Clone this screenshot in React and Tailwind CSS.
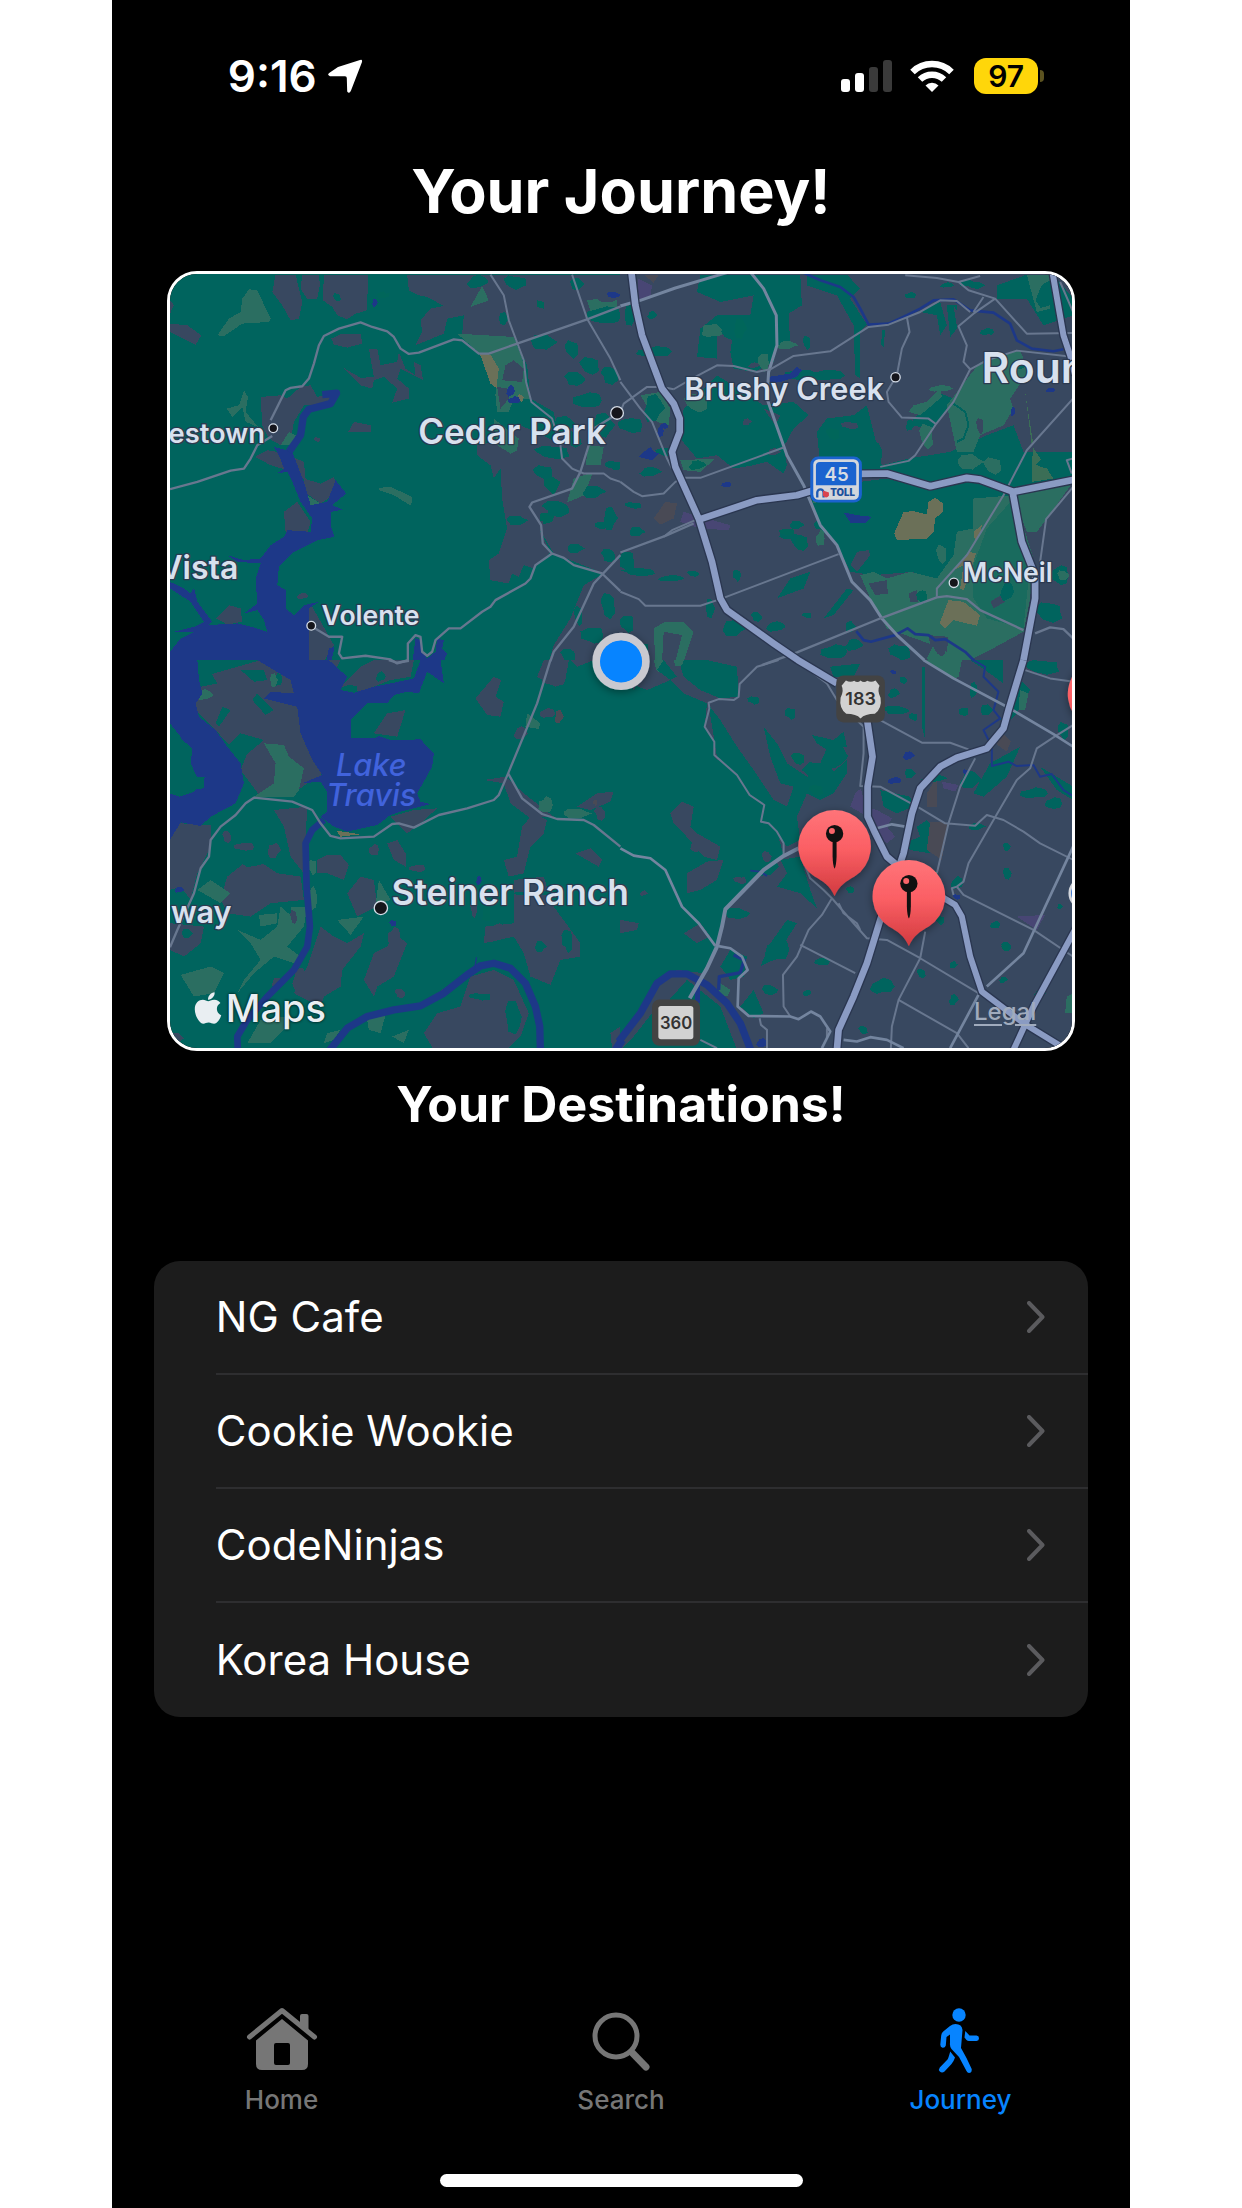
import { FaApple } from "react-icons/fa";

const SLATE = "#384860";
const GREEN = "#00645e";
const LIGHT = "#2b6e61";
const DEEP = "#00665a";
const TAN = "#6b7058";
const PURPLE = "#484674";
const BROWN = "#494a55";
const WATER = "#1d3888";

// Jagged patch around a centre point; the outline varies with its position.
function blob([cx, cy, rx, ry]) {
  const n = 9;
  let d = "";
  for (let i = 0; i < n; i++) {
    const a = (i / n) * Math.PI * 2;
    const k = 0.62 + 0.5 * Math.abs(Math.sin(cx * 1.7 + cy * 0.9 + i * 2.3));
    d += (i ? "L" : "M") + Math.round(cx + Math.cos(a) * rx * k) + " " + Math.round(cy + Math.sin(a) * ry * k);
  }
  return d + "Z";
}

// The map is tiled in four sheets, each with its own origin.
const sheets = [
  {
    x: 0,
    y: 0,
    base: GREEN,
    w: 1384,
    h: 1190,
    areas: [
      [SLATE, "M345 28L335 80 365 120 390 165 415 160 425 110 405 28ZM425 28L420 70 440 100 470 100 478 60 475 28ZM490 28L487 105 515 125 530 150 560 162 585 145 620 135 622 28Z"],
      [SLATE, "M740 28L745 75 775 90 800 95 850 122 810 130 780 165 785 200 765 240 850 205 860 160 910 150 905 205 1000 220 1065 220 1100 300 1110 400 1180 440 1200 560 1240 680 1110 715 1130 780 1180 865 1330 925 1270 960 1230 1060 1180 1140 1165 1190 1384 1190 1384 28Z"],
      [SLATE, "M950 540L1000 530 1080 480 1210 540 1240 680 1110 715 1130 780 1170 860 1120 910 1090 900 1075 935 1055 925 1045 955 990 945 985 885 1015 865 1040 790 1025 700 1020 610 1000 640 990 600 950 570Z"],
      [SLATE, "M28 175L80 180 122 210 105 238 28 200ZM512 220L545 205 600 205 605 235 560 247 520 238ZM625 250L650 250 660 300 710 290 715 260 735 310 765 330 760 290 780 300 788 345 720 310 710 340 745 370 745 400 695 412 710 370 670 335 640 345 635 370 600 360 545 305 600 338 640 335Z"],
      [SLATE, "M300 395L360 390 380 400 420 365 450 360 470 395 530 380 510 415 430 420 400 470 395 500 360 540 325 520 305 480ZM430 640L480 655 520 635 535 680 480 715 430 680ZM370 740L410 710 450 770 440 805 375 800ZM283 575L320 555 350 560 380 615 330 600ZM165 1060L205 1020 240 1030 245 1070 200 1078ZM563 500L580 470 630 480 632 500ZM435 1020L455 1025 520 1140 490 1190 440 1190ZM395 575L430 590 435 640 415 640ZM28 105L40 120 28 145Z"],
      [LIGHT, "M170 210L205 160 240 140 245 100 265 72 290 75 330 160 325 170 245 175 190 212ZM890 205L1060 215 1085 280 1110 400 1060 400 1045 440 1010 440 1005 390 1010 300 960 265ZM655 668L690 665 755 695 752 722 700 690 655 675ZM250 375L262 395 255 440 292 485 255 470 245 425 215 455 198 430 235 420ZM930 125L965 62 985 105ZM1280 105L1370 92 1370 125 1290 138ZM1285 540L1330 545 1320 600 1275 600ZM1240 640L1297 622 1272 690 1220 712ZM1000 460L1075 520 1070 555 1050 565 1010 540ZM430 685L480 715 450 720ZM360 540L385 500 405 510 400 540Z"],
      [SLATE, "M1035 300L1060 285 1090 310 1085 350 1025 345ZM1010 365L1040 370 1045 400 1020 430Z"],
      [TAN, "M958 265L990 268 1015 310 1008 368 990 355ZM1075 385L1090 395 1085 410 1070 405Z"],
      [DEEP, "M1155 620L1200 650 1180 690 1150 660ZM1140 745L1185 740 1175 770 1140 780ZM650 85L690 70 685 95 655 100ZM1130 105L1150 110 1150 130 1130 125Z"],
    ],
    blobs: [
      [GREEN, [[1060, 50, 30, 22], [1150, 230, 48, 22], [1030, 160, 18, 18], [1250, 55, 25, 18], [1330, 150, 50, 30], [1235, 250, 22, 28], [1290, 300, 35, 26], [1350, 330, 32, 26], [1245, 340, 38, 20], [1280, 405, 42, 26], [1210, 480, 40, 26], [1180, 560, 60, 20], [1240, 520, 30, 26], [1150, 620, 32, 22], [1330, 480, 38, 36], [1300, 680, 40, 18], [1070, 765, 38, 14], [1190, 730, 50, 24], [1320, 780, 16, 14], [1245, 850, 30, 14], [1360, 600, 26, 16], [1350, 760, 24, 34], [1345, 870, 26, 20], [1345, 1020, 26, 38], [1295, 1110, 34, 28], [1255, 1050, 14, 32], [1080, 50, 18, 16], [950, 50, 32, 20], [690, 60, 28, 30], [530, 95, 14, 12], [960, 390, 14, 40], [1225, 1170, 28, 20]]],
      [SLATE, [[425, 993, 16, 10], [470, 522, 10, 8], [1130, 780, 26, 20], [1350, 90, 50, 20]]],
      [WATER, [[643, 113, 9, 12], [1360, 88, 26, 9], [1050, 378, 12, 18], [1060, 405, 18, 12]]],
    ],
    water:
      "M340 545L395 560 430 650 450 720 500 710 525 645 557 685 515 720 545 733 512 740 510 780 522 815 470 825 400 860 355 905 350 960 375 975 375 1030 400 1050 430 1020 475 1010 445 1030 445 1200 28 1200 28 1160 60 1120 140 1080 230 1075 290 1090 320 1100 310 1065 290 1035 250 1045 290 1015 285 940 300 895 230 890 200 870 250 885 300 880 330 840 370 815 380 795 450 800 455 760 420 710 395 650 380 620 348 625 370 610 355 570ZM28 950L70 970 90 985 100 968 110 1010 155 1070 120 1100 40 1100 100 1085 130 1070 90 1010 28 970ZM765 1120L783 1125 785 1160 800 1180 825 1160 830 1120 850 1125 845 1150 860 1165 845 1200 755 1200ZM505 1150L522 1145 510 1200 495 1200Z",
    rivers: [[22, "M485 388L528 384 510 415 445 432 428 455 420 510 385 560"]],
    roads: [
      [7, "M28 672L110 650 210 616 250 610 270 580 290 540 335 512M330 465L335 455 360 405M360 405L375 375 390 368 425 363 445 340 460 295 475 240 490 212 535 190 600 171 635 185 680 198 700 215 720 250 745 266 775 262 880 222 905 225 955 265 985 265 1070 235 1280 162 1380 124"],
      [6, "M990 28L1030 90 1045 165 1090 285 1097 350 1113 410 1175 460 1200 540 1205 580 1235 610 1270 625 1330 625 1350 640 1380 650M1235 28L1280 160 1350 280 1380 345"],
      [7, "M1380 440L1300 490 1285 540 1260 620 1235 670 1115 712 1107 725 1142 780 1147 835 1175 865 1210 878 1240 900 1325 925 1380 978M1175 865L1125 900 1110 940 1095 955 1005 1005 990 1025 965 1040 900 1090 865 1090 825 1125 815 1160 800 1172 785 1160 780 1115 765 1110 742 1135 742 1185 710 1195 690 1183 615 1172 545 1180 535 1165 545 1115 505 1115 455 1085M1380 870L1300 955 1240 1085 1180 1160 1170 1188"],
    ],
    highways: [],
  },
  {
    x: 1380,
    y: 0,
    base: SLATE,
    w: 1380,
    h: 1190,
    areas: [
      [GREEN, "M240 28L540 28 545 120 505 145 510 240 470 250 460 290 400 320 340 310 330 260 340 190 290 195 290 280 230 275 240 190 290 150 390 150 400 90 300 110 230 80ZM560 28L680 28 720 70 690 100 740 178 720 200 720 340 705 330 700 180 650 90 560 60ZM190 430L290 330 430 420 520 410 565 450 520 490 490 545 500 600 490 625 440 590 400 600 340 610 290 570 230 580 180 520ZM620 460L700 450 740 420 785 600 865 580 990 560 1100 510 1180 480 1210 560 1359 560 1359 650 1180 680 1040 640 930 670 800 620 600 600 590 500ZM570 690L720 650 800 640 930 675 1040 645 1180 690 1100 800 1000 900 950 990 880 920 760 930 690 920 650 840 600 790Z"],
      [GREEN, "M1130 100L1220 100 1270 180 1359 150 1359 100 1300 28 1220 28 1130 60ZM900 140L960 110 980 180 960 210 950 150ZM980 120L1010 120 1010 190 990 215ZM785 195L795 195 790 245 783 240ZM865 480L950 380 1000 400 940 490ZM610 1060L680 970 700 975 640 1050ZM470 1000L510 940 570 920 550 970Z"],
      [LIGHT, "M100 1090L130 1072 190 1070 220 1100 190 1190 165 1190 185 1110 130 1100 125 1190 105 1190Z"],
      [LIGHT, "M1080 290L1200 255 1225 320 1170 400 1180 430 1150 480 1080 510 1060 560 1010 560 980 420ZM1220 28L1300 28 1290 130 1250 140ZM1180 690L1359 650 1280 760 1250 800 1220 800ZM245 210L250 180 300 175 305 210 260 215ZM865 440L880 420 920 410 960 370 965 395 900 450ZM180 585L285 580 240 620 190 615ZM60 390L120 380 150 430 145 480 110 470ZM570 680L720 670 650 690 580 715Z"],
      [LIGHT, "M1060 700L1180 690 1240 880 1230 1000 1210 1100 1100 1160 1020 1200 950 1200 920 1180 940 1140 800 1090 750 1000 720 930 760 920 800 940 870 920 950 940 1000 870 1010 800 1060 790Z"],
      ["#196b5e", "M1100 790L1180 700 1230 900 1210 1090 1100 1060 1060 1000 1060 900Z"],
      ["#3b6e56", "M1238 545L1300 640 1235 650ZM1215 380L1240 540 1235 540Z"],
      [TAN, "M850 740L880 738 920 748 925 710 945 697 968 715 968 740 945 760 940 800 920 820 830 825 822 805ZM985 1005L1030 1010 1080 1050 1070 1082 1000 1065 975 1090 958 1075ZM1000 915L1045 860 1068 865 1040 950 1030 975 1020 970 1030 900ZM1060 800L1085 780 1080 810 1065 830Z"],
      [PURPLE, "M52 40L95 60 90 100 55 100ZM190 740L330 780 325 795 240 790 180 770Z"],
      [BROWN, "M100 760L135 710 170 715 160 760 120 778ZM70 28L115 28 100 52Z"],
      [SLATE, "M745 955L800 945 803 985 765 990ZM690 900L710 860 745 855 750 870 710 920ZM865 985L890 975 895 1010 870 1010ZM925 1110L985 1115 980 1160 930 1140ZM1000 120L1050 200 1015 215ZM1110 1010L1150 985 1155 1010 1120 1030ZM430 430L480 450 465 480Z"],
    ],
    blobs: [
      [GREEN, [[30, 150, 22, 30], [95, 150, 16, 12], [100, 260, 50, 18], [330, 190, 40, 32], [330, 390, 45, 20], [540, 330, 45, 20], [610, 330, 60, 18], [770, 560, 22, 30], [30, 480, 36, 26], [100, 430, 34, 40], [260, 490, 32, 24], [320, 550, 30, 26], [90, 620, 36, 14], [130, 560, 24, 14], [40, 720, 28, 10], [50, 800, 28, 14], [20, 890, 22, 40], [150, 940, 38, 10], [220, 925, 22, 9], [60, 920, 60, 12], [500, 810, 22, 14], [540, 830, 30, 24], [530, 780, 26, 12], [600, 780, 24, 12], [410, 1055, 20, 14], [465, 1085, 28, 16], [340, 1090, 40, 24], [270, 1030, 16, 28], [350, 930, 12, 20], [560, 1050, 14, 10], [690, 1085, 18, 16], [640, 1160, 38, 24], [700, 1140, 28, 18], [840, 1160, 34, 26], [1320, 930, 24, 34], [1290, 1040, 48, 30], [1160, 980, 20, 30], [1070, 60, 30, 10], [870, 90, 16, 10], [980, 60, 20, 8], [1040, 55, 20, 12], [1280, 90, 34, 40], [1300, 590, 50, 22], [1100, 200, 20, 12], [1200, 300, 26, 12], [560, 230, 12, 22], [20, 1075, 20, 30], [60, 1150, 30, 22], [870, 480, 16, 16]]],
      [DEEP, [[360, 190, 22, 30], [230, 600, 28, 14], [500, 800, 22, 12], [545, 835, 24, 20], [905, 995, 16, 24], [640, 505, 24, 18]]],
      [LIGHT, [[280, 195, 24, 16], [430, 290, 16, 32], [500, 240, 34, 12], [920, 510, 22, 40], [960, 370, 34, 10], [1050, 590, 46, 22], [1120, 600, 30, 26], [1330, 930, 22, 14], [230, 410, 38, 30], [965, 865, 18, 28], [600, 820, 12, 28]]],
      [SLATE, [[400, 300, 18, 8], [460, 560, 22, 10], [380, 470, 16, 10], [690, 480, 28, 12], [960, 1150, 20, 22], [1080, 480, 12, 26]]],
      [WATER, [[318, 658, 14, 9], [1290, 375, 14, 7], [1178, 440, 6, 16], [120, 498, 9, 22], [135, 482, 12, 8]]],
    ],
    water:
      "M445 335L510 325 530 305 545 315 530 335 480 350 450 355ZM55 575L68 562 90 545 100 558 115 565 95 585ZM670 742L710 750 755 755 735 773 690 772Z",
    rivers: [[8, "M545 20L600 45 660 65 700 95 720 130 745 178 805 175 860 150 900 130 940 105 1000 102 1050 135 1120 142 1170 175 1190 225 1235 250 1300 258 1330 252M708 1098L730 1125 752 1130 825 1110 862 1090 885 1107 925 1110 945 1125 975 1122 1035 1160 1062 1187"]],
    teal: "M1000 415L1035 440 1045 480 1030 520 1010 530",
    roads: [
      [9, "M0 122L60 105 165 68 320 22M390 20L430 70 468 150 470 240 445 320 440 400 500 570 550 660 600 780 650 840 695 950 750 1005 785 1060 830 1110 912 1185"],
      [6, "M160 372L215 340 290 300 340 302 410 320 450 312 520 272 630 258 745 185 805 178 900 140 960 105 1010 107 1050 140M855 30L950 38 1015 50 1045 75 1125 100 1220 205 1359 203M1015 50L1080 32M1090 95L1060 140M1125 100L1060 145 1015 183 1040 240 1030 290 1050 312M1359 275L1190 256 1100 285 1050 312 1000 410 945 480 885 570 865 587 780 605M860 155L868 200 845 250 830 330 800 380 805 410 845 457 925 460 945 475M1359 400L1220 555 1150 690 1040 870 950 970 950 995M0 350L60 430 95 470 140 580 155 610M0 440L10 415 80 365 125 365 160 372M0 650L40 680 65 693 130 685 165 650 190 638 240 638 490 547M130 815L155 795 225 765M0 980L55 1002 75 1022 240 1022 300 1002 655 867M1359 665L1278 762 1260 890M1320 50L1359 140M1359 580L1340 585 1355 625"],
      [7, "M0 862L135 812 220 775M425 1200L530 1162 785 1058 950 997 980 993 1040 1002 1080 1035 1210 1095M1245 1105L1290 1087 1330 1092 1359 1120"],
    ],
    highways: [
      [20, "M33 20L45 120 65 210 110 330 125 370 160 415 178 460 178 500 155 560 165 605 235 760 275 890 300 1000 320 1035 460 1135 533 1185 650 1255"],
      [20, "M240 762L410 705 530 690 630 660M720 626L800 625 930 663 1040 638 1080 643 1180 680 1380 640"],
      [20, "M1178 684L1205 830 1245 930 1245 1000 1210 1185"],
      [18, "M1297 20L1330 210 1350 270 1365 330"],
    ],
  },
  {
    x: 0,
    y: 1185,
    base: GREEN,
    w: 1384,
    h: 1200,
    areas: [
      [SLATE, "M115 60L160 40 300 0 380 30 405 90 430 200 485 350 440 370 400 400 300 410 240 330 260 280 200 250 165 210 105 150ZM28 500L60 490 150 495 150 560 110 640 90 720 60 680 28 690ZM200 650L250 610 290 600 350 640 420 650 430 720 330 730 270 770 200 760 180 715ZM28 790L130 800 120 850 70 890 28 870ZM340 450L440 440 430 640 390 590 370 500ZM470 600L500 585 540 585 565 615 550 660 500 640 470 640ZM560 700L600 650 640 660 650 740 590 770ZM480 800L520 830 560 850 610 820 600 860 545 930 540 980 490 1010 480 1040 400 1000 440 920ZM680 550L710 540 735 580 735 620 700 600ZM945 115L1000 50 1022 60 1005 110 1030 125 1020 170 980 165ZM640 220L680 160 735 150 710 230ZM1130 50L1150 0 1225 0 1215 60 1185 80ZM1300 0L1250 20 1230 0Z"],
      [SLATE, "M1085 500L1120 460 1160 480 1150 520 1110 560 1090 640 1045 650 1030 600 1070 590ZM1060 660L1150 650 1165 700 1180 740 1260 850 1260 890 1200 900 1170 975 1110 950 1090 880 1060 830 970 850 975 800 1060 790ZM790 1120L830 1060 900 1040 930 950 1000 930 1060 960 1105 1060 1080 1130 1040 1170 820 1170ZM970 360L1035 350 1090 400 1180 470 1110 475 1050 430 1030 370ZM1245 580L1290 565 1325 600 1315 620ZM700 820L740 850 720 900 700 950 650 980 640 1010 610 960 640 880 680 860ZM830 1000L900 950 940 920 900 960ZM690 470L760 450 830 445 780 490 740 520Z"],
      [SLATE, "M540 80L600 20 640 0 760 0 750 50 690 60 600 95ZM460 0L540 0 520 40ZM1350 1120L1380 1100 1380 1165 1355 1165ZM1250 440L1310 400 1360 395 1350 425 1290 450Z"],
      [LIGHT, "M310 250L370 255 385 290 430 325 415 390 400 410 280 410 340 370 345 310ZM110 690L150 660 210 700 180 730ZM230 810L300 840 350 800 360 740 430 800 380 860 420 890 400 910 340 890 280 940 230 1000 250 960 300 900 270 850ZM60 945L150 920 190 940 160 1000 100 1010ZM260 1150L300 1080 375 1070 375 1105 330 1150ZM530 780L610 770 570 825ZM655 660L690 720 645 735ZM620 1080L675 1065 660 1120 625 1110ZM695 1130L745 1110 730 1150ZM500 1120L540 1110 520 1140 490 1150ZM295 765L350 760 350 790 300 800ZM390 740L440 740 430 800 400 800ZM1100 160L1140 190 1135 207 1095 200Z"],
      [GREEN, "M240 30L310 30 320 60 280 65ZM275 120L290 100 340 150 315 165ZM165 190L185 140 210 150 175 200ZM110 40L150 35 170 70 120 80ZM200 260L240 220 310 240 250 290Z"],
      [TAN, "M528 512L600 523 540 530Z"],
      [DEEP, "M970 740L990 740 990 785 965 780Z"],
    ],
    blobs: [
      [SLATE, [[770, 625, 24, 12], [1080, 220, 20, 20], [1160, 160, 22, 16], [400, 770, 12, 20], [340, 570, 22, 26], [250, 560, 30, 14], [110, 560, 20, 20], [200, 530, 16, 18], [640, 570, 14, 20], [1180, 60, 34, 20], [1320, 460, 20, 20], [50, 1135, 22, 16], [420, 960, 28, 34], [700, 830, 18, 30], [1010, 820, 34, 28], [940, 745, 12, 26], [720, 1000, 20, 14], [350, 970, 20, 16]]],
      [GREEN, [[350, 60, 14, 22], [280, 600, 40, 22], [330, 540, 44, 14], [240, 500, 16, 14], [1140, 860, 20, 16], [1220, 840, 16, 40], [1060, 1070, 30, 50], [960, 1010, 34, 12], [1120, 700, 60, 8], [570, 85, 22, 12], [660, 50, 14, 16], [80, 820, 20, 14]]],
      [LIGHT, [[130, 105, 26, 16], [340, 60, 14, 20], [1155, 435, 20, 28], [1250, 460, 50, 14], [455, 720, 14, 40], [455, 620, 12, 26]]],
      [BROWN, [[1195, 170, 14, 20], [1305, 428, 6, 10]]],
      [WATER, [[55, 690, 14, 9], [698, 790, 13, 9], [955, 662, 8, 14]]],
    ],
    water:
      "M28 0L110 0 115 60 125 100 105 130 115 170 165 210 200 260 240 310 250 370 225 430 150 470 120 498 60 487 28 540 28 400 55 410 100 395 135 350 105 350 75 320 60 230 28 190ZM290 0L505 0 560 50 540 90 580 98 640 80 690 70 760 55 780 0 840 0 850 70 800 35 775 100 740 95 700 105 680 130 620 130 570 180 570 235 640 235 655 228 690 240 780 238 820 280 815 320 770 400 780 425 810 432 720 455 690 465 650 495 560 515 520 500 480 470 500 455 500 395 480 365 425 370 485 345 455 300 420 220 410 140 310 115 330 95 400 100 390 60Z",
    green: "M28 210L60 235 95 265 90 310 108 350 130 350 130 385 60 390 95 375 85 350 50 400 28 400Z",
    rivers: [[20, "M490 480L455 510 435 550 438 680 448 800 440 860 400 930 320 1010 260 1080 230 1130 232 1180"], [22, "M500 1180L560 1105 620 1070 700 1050 780 1038 850 1000 920 945 960 918 1000 910 1050 925 1095 970 1125 1040 1138 1100 1140 1180"], [4, "M948 892L942 930"], [24, "M1360 1180L1385 1140"]],
    roads: [
      [7, "M28 862L50 810 100 700 120 625 145 590 150 540 180 500 225 465 255 430 280 413 395 425 455 450 480 490 510 528 540 535 640 530 695 492 715 490 760 503 835 465 920 445 1000 420 1015 405 1043 340 1130 130 1170 0M1043 340L1085 415 1145 462 1190 477 1270 480 1300 495 1380 560M685 0L710 8 745 2"],
    ],
    highways: [],
  },
  {
    x: 1380,
    y: 1185,
    base: SLATE,
    w: 1380,
    h: 1200,
    areas: [
      [GREEN, "M0 60L80 90 150 60 190 100 260 130 253 200 282 245 282 290 350 350 388 405 432 435 422 485 470 515 490 585 430 630 320 745 290 860 250 940 170 930 100 980 0 1150ZM175 0L260 0 350 20 355 110 300 115 240 90 190 50ZM0 1170L120 1050 200 960 300 1040 350 1170Z"],
      [GREEN, "M265 135L300 180 350 260 400 330 460 420 500 440 520 380 480 370 450 290 430 200 470 250 500 310 560 350 600 370 680 300 680 340 640 400 600 420 560 400 530 470 540 540 500 560 440 500 350 400 290 290ZM575 225L640 240 670 215 680 260 620 270 590 250ZM480 600L540 590 570 690 590 745 540 700 470 680 500 640ZM330 870L380 890 370 950 330 960 300 920ZM780 390L870 410 880 440 830 460 790 440ZM890 500L920 480 950 510 930 580 870 570 850 550 900 530ZM500 780L530 790 460 900 420 920 450 850ZM360 1040L400 990 430 1060 400 1075ZM1060 400L1110 310 1200 260 1160 350 1090 410ZM1140 180L1190 100 1200 60 1230 90 1190 160 1160 190ZM905 20L915 20 915 240 905 200ZM630 20L720 10 700 50 640 50Z"],
      [LIGHT, "M910 0L1025 0 1015 50 1000 60ZM300 970L330 990 320 1010 295 1000ZM1340 1010L1359 1000 1359 1060 1335 1060ZM1200 90L1225 100 1215 150 1195 150Z"],
      [LIGHT, "M100 0L128 0 125 20 112 48ZM160 0L190 0 185 16 165 18Z"],
      [PURPLE, "M705 400L722 385 735 440 770 450 815 475 800 500 825 530 800 550 785 540 760 480 690 440ZM1190 770L1275 765 1250 810ZM965 365L1015 375 1005 395 970 385Z"],
      [BROWN, "M930 485L985 488 965 600 920 570ZM1125 250L1150 220 1172 245 1160 275ZM920 400L950 350 950 440 920 440Z"],
      [SLATE, "M150 460L185 425 220 440 210 500 230 520 300 560 290 600 250 590 190 520 160 490ZM200 640L260 605 310 600 290 660 240 690 200 700ZM0 780L55 790 50 810 0 820ZM190 820L240 790 270 830 230 850ZM360 700L400 690 380 740ZM0 30L60 60 40 90Z"],
      [GREEN, "M130 0L170 50 150 60 110 30ZM1050 0L1150 0 1150 70 1095 30ZM1260 320L1359 380 1359 420 1310 390ZM60 1165L120 1110 95 1060 40 1130Z"],
    ],
    blobs: [
      [GREEN, [[510, 160, 16, 20], [400, 120, 18, 14], [830, 150, 50, 12], [880, 170, 14, 12], [820, 100, 18, 14], [1060, 90, 12, 24], [1100, 150, 24, 16], [1030, 155, 14, 14], [870, 340, 20, 14], [940, 355, 40, 12], [1050, 360, 34, 26], [1160, 560, 14, 12], [1162, 640, 16, 18], [1160, 860, 18, 14], [1125, 795, 14, 12], [1000, 915, 14, 10], [605, 905, 22, 14], [785, 980, 34, 26], [905, 940, 16, 14], [1000, 1020, 16, 16], [1150, 960, 14, 9], [690, 690, 14, 10], [960, 780, 14, 14], [940, 640, 20, 10], [1010, 670, 18, 20], [560, 1000, 12, 10], [450, 990, 30, 14], [470, 870, 34, 40], [1260, 1000, 20, 10], [1320, 740, 10, 8], [730, 1110, 16, 12], [1240, 400, 40, 18], [1300, 430, 24, 20], [1070, 500, 30, 10], [1330, 210, 16, 30], [410, 620, 60, 40], [350, 760, 50, 16], [1270, 20, 60, 22], [850, 60, 14, 10], [600, 340, 60, 34], [640, 290, 40, 40], [220, 1140, 26, 22]]],
      [DEEP, [[535, 295, 24, 18], [590, 390, 26, 16], [1030, 158, 12, 10], [605, 903, 14, 9], [690, 688, 12, 8], [1155, 862, 12, 10]]],
      [SLATE, [[90, 40, 40, 20], [440, 590, 18, 16], [360, 660, 20, 12], [420, 700, 14, 12], [70, 700, 12, 8], [235, 560, 24, 20]]],
      [WATER, [[865, 287, 20, 12], [822, 362, 20, 11], [820, 36, 11, 6], [1010, 710, 12, 8], [1036, 336, 8, 10], [425, 1150, 18, 14]]],
    ],
    water: "M225 970L240 975 238 1030 225 1030Z",
    rivers: [[22, "M-5 1145L60 1060 110 970 150 942 200 942 260 975 320 1030 360 1090 395 1180"], [10, "M295 990L297 950 360 938 372 900 340 885"], [6, "M1060 0L1095 20 1090 50 1135 95 1120 150 1140 175 1090 210 1115 260 1115 318 1165 305 1190 318 1240 315 1260 350 1295 342 1330 390 1359 408M390 632L420 635 440 648"]],
    roads: [
      [6, "M475 0L410 20 358 72 355 110 340 120 295 117 265 128 267 145 253 200 282 245 282 285 350 345 388 405 432 435 422 485 445 490 470 515 490 550 490 585M555 620L570 655 610 690 635 715 700 790 740 835 800 840 900 895 1075 1000M655 730L670 760 710 790 720 810M635 715L605 765 565 810 530 890 488 945 490 1040 510 1070M540 855L705 940M950 640L985 490 1020 380 1065 295M915 815L900 895 835 1020 815 1100 812 1165M835 1020L1010 1120 1045 1165M580 40L620 70 650 120 730 200 730 280 720 378 780 380 900 445 975 490 1065 497 1100 465 1150 480 1210 515 1260 550 1360 600M780 180L905 248 990 248 1045 268M1359 195L1300 232 1250 265 1230 325 1190 360 1120 480 1045 610 1030 665 1010 680 995 685 1000 705M1010 680L1030 705 1240 810 1359 890M1215 30L1290 55 1359 65M418 1075L422 1095 440 1110 440 1165M620 1105L620 1135M240 1140L290 1165"],
      [8, "M0 565L40 587 90 595 135 630 185 740 235 790 285 858M290 858L330 865 365 890 382 930 355 955 352 1040 385 1068 510 1070 535 1078 572 1055 600 1070 630 1115 605 1165M910 0L1000 55 1160 140 1300 222 1359 260M1359 560L1210 880 1100 980M770 505L815 493 855 500M670 1140L710 1145 750 1132 800 1140 850 1165M1075 1005L1030 1090 990 1165"],
      [12, "M535 565L490 588 430 630 315 748 305 800 290 860M290 860L260 925 208 1015"],
    ],
    highways: [
      [20, "M740 175L757 290 742 380 742 470 765 520 800 590 835 620"],
      [20, "M1210 0L1165 150 1150 205 1100 265 1010 293 960 320 900 385 875 460 850 580 830 640 780 780 740 910 700 1010 655 1110 650 1170"],
      [18, "M960 708L1005 735 1025 770 1050 890 1085 995 1210 1090 1340 1170M1370 800L1240 1040 1180 1170"],
    ],
  },
];

const places = [
  { name: "estown", x: 313, y: 533, size: 82, anchor: "end", dot: [338, 489, 13] },
  { name: "Cedar Park", x: 773, y: 535, size: 105, dot: [1370, 443, 19] },
  { name: "Vista", x: 233, y: 943, size: 96, anchor: "end" },
  { name: "Volente", x: 483, y: 1080, size: 80, dot: [452, 1082, 13] },
  { name: "Brushy Creek", x: 1572, y: 405, size: 92, dot: [2206, 336, 14] },
  { name: "Roun", x: 2464, y: 352, size: 128 },
  { name: "McNeil", x: 2408, y: 950, size: 80, dot: [2381, 953, 14] },
  { name: "way", x: 213, y: 1975, size: 92, anchor: "end" },
  { name: "Steiner Ranch", x: 693, y: 1920, size: 106, dot: [661, 1929, 20] },
];

function Pin({ x, y }) {
  return (
    <g transform={`translate(${x} ${y})`}>
      <path d="M0 150C-14 118 -34 106 -60 91A109 109 0 1 1 60 91C34 106 14 118 0 150Z" fill="url(#pin)" filter="url(#shade)" />
      <path d="M-6 -20H6V30Q5 60 0 67Q-5 60 -6 30Z" fill="#111" />
      <circle cy="-38" r="26" fill="#111" />
      <circle cx="-8" cy="-46" r="9" fill="#f9656a" />
    </g>
  );
}

function MapArt() {
  return (
    <svg viewBox="28 26 2709 2322" className="block w-full font-['Inter',sans-serif]" role="img" aria-label="Map of your journey">
      <defs>
        <linearGradient id="pin" x1="0" y1="0" x2="0" y2="1">
          <stop offset="0" stopColor="#ff7479" />
          <stop offset="0.45" stopColor="#fb5f64" />
          <stop offset="1" stopColor="#d13a3f" />
        </linearGradient>
        <filter id="shade" x="-30%" y="-30%" width="160%" height="160%">
          <feDropShadow dx="0" dy="6" stdDeviation="12" floodColor="#000" floodOpacity="0.4" />
        </filter>
      </defs>
      {sheets.map((s, i) => (
        <g key={i} transform={`translate(${s.x} ${s.y})`} shapeRendering="crispEdges">
          <rect width={s.w} height={s.h} fill={s.base} />
          {s.areas.map(([c, d], j) => (
            <path key={j} d={d} fill={c} />
          ))}
          {s.blobs.map(([c, list], j) => (
            <path key={j} d={list.map(blob).join("")} fill={c} />
          ))}
          <path d={s.water} fill={WATER} />
          {s.green && <path d={s.green} fill={GREEN} />}
          {s.teal && <path d={s.teal} fill="none" stroke={GREEN} strokeWidth="6" />}
        </g>
      ))}
      {sheets.map((s, i) => (
        <g key={i} transform={`translate(${s.x} ${s.y})`} fill="none" strokeLinejoin="round">
          {s.rivers.map(([w, d], j) => (
            <path key={j} d={d} stroke={WATER} strokeWidth={w} />
          ))}
          {s.roads.map(([w, d], j) => (
            <path key={j} d={d} stroke={w > 7 ? "#74859f" : "#68778f"} strokeWidth={w} />
          ))}
        </g>
      ))}
      {["#2a3650", "#8a9bc3"].map((c, k) => (
        <g key={c} fill="none" stroke={c} strokeLinejoin="round">
          {sheets.map((s, i) => (
            <g key={i} transform={`translate(${s.x} ${s.y})`}>
              {s.highways.map(([w, d], j) => (
                <path key={j} d={d} strokeWidth={k ? w : w + 8} />
              ))}
            </g>
          ))}
        </g>
      ))}

      {places.map((p) => (
        <g key={p.name}>
          {p.dot && <circle cx={p.dot[0]} cy={p.dot[1]} r={p.dot[2]} fill="#15151b" stroke="#d5dde8" strokeWidth="4" />}
          <text x={p.x} y={p.y} fontSize={p.size} textAnchor={p.anchor} fontWeight="600" fill="#d8e1ee" stroke="#2c3a50" strokeWidth="8" strokeLinejoin="round" paintOrder="stroke">
            {p.name}
          </text>
        </g>
      ))}
      <g fontSize="92" fontWeight="500" fontStyle="italic" fill="#4163dc" textAnchor="middle">
        <text x="632" y="1533">Lake</text>
        <text x="632" y="1622">Travis</text>
      </g>

      {/* Toll road 45 */}
      <rect x="1950" y="574" width="155" height="138" rx="24" fill="#1a63cf" />
      <rect x="1959" y="582" width="137" height="122" rx="16" fill="#d3d6dc" />
      <path d="M1967 660V602Q1967 590 1979 590H2076Q2088 590 2088 602V660Z" fill="#1a63cf" />
      <text x="2029" y="646" fontSize="56" fontWeight="600" fill="#d8dce3" textAnchor="middle">45</text>
      <text x="2010" y="693" fontSize="29" fontWeight="900" fill="#1d4f9c">TOLL</text>
      <path d="M1971 697V682A9 9 0 0 1 1990 682V697" fill="none" stroke="#1d5bb5" strokeWidth="7" />
      <path d="M1988 676L2006 682V692Q1998 702 1988 692Z" fill="#d9434e" />

      {/* US 183 */}
      <rect x="2028" y="1231" width="146" height="141" rx="22" fill="#434343" />
      <path d="M2057 1246Q2070 1254 2082 1247Q2092 1255 2101 1246Q2111 1255 2121 1247Q2133 1254 2146 1246L2158 1262Q2150 1276 2161 1298Q2166 1330 2144 1346Q2114 1346 2101 1360Q2088 1346 2058 1346Q2036 1330 2041 1298Q2052 1276 2044 1262Z" fill="#d2d2d2" />
      <text x="2101" y="1321" fontSize="54" fontWeight="600" fill="#333" textAnchor="middle">183</text>

      {/* Loop 360 */}
      <rect x="1475" y="2204" width="144" height="139" rx="22" fill="#434343" />
      <rect x="1494" y="2223" width="105" height="100" rx="8" fill="#d2d2d2" />
      <text x="1547" y="2291" fontSize="50" fontWeight="600" fill="#333" textAnchor="middle">360</text>

      <circle cx="2775" cy="1885" r="46" fill="#2f6fd0" stroke="#d3d6dc" strokeWidth="8" />

      <circle cx="1382" cy="1189" r="74" fill="#0784ff" stroke="#c9c9d0" strokeWidth="24" filter="url(#shade)" />
      <circle cx="1382" cy="1189" r="63" fill="#0784ff" />
      <Pin x={2832} y={1287} />
      <Pin x={2023} y={1744} />
      <Pin x={2246} y={1894} />
    </svg>
  );
}

function StatusBar() {
  return (
    <header className="flex items-center justify-between pt-[58px] pr-[86px] pl-[116px]">
      <div className="flex h-9 items-center gap-[10px]">
        <time className="text-[44px] leading-9 font-semibold">9:16</time>
        <svg viewBox="0 0 36 36" className="h-9 w-9" fill="#fff" aria-label="Location">
          <path d="M33 2Q35.500 1 35 4L24 32.500Q22.300 36.500 20.200 33.500L19.800 20Q19.800 18.300 18 18.300L3 18.200Q-0.500 17 2.500 14.800L11 9Z" />
        </svg>
      </div>
      <div className="flex h-9 items-center">
        <svg viewBox="0 0 52 32" className="mr-[17px] h-8 w-[52px]" fill="#fff" aria-label="Signal">
          <rect y="19" width="9" height="13" rx="3" />
          <rect x="14" y="13" width="9" height="19" rx="3" />
          <rect x="28" y="7" width="9" height="25" rx="3" fill="#3a3a3a" />
          <rect x="42" width="9" height="32" rx="3" fill="#3a3a3a" />
        </svg>
        <svg viewBox="0 0 44 32" className="mr-5 h-8 w-11" fill="none" stroke="#fff" strokeWidth="6.500" aria-label="Wi-Fi">
          <path d="M2.500 12A28 28 0 0 1 41.500 12" />
          <path d="M10 19.500A17.500 17.500 0 0 1 34 19.500" />
          <path d="M22 32L15.500 25.500A9 9 0 0 1 28.500 25.500Z" fill="#fff" stroke="none" />
        </svg>
        <div className="flex h-9 w-16 items-center justify-center rounded-xl bg-[#ffd60a] text-[30px] leading-9 font-semibold text-black">97</div>
        <div className="ml-[2px] h-3 w-1 rounded-r-full bg-[#5c5320]" />
      </div>
    </header>
  );
}

function HomeIcon() {
  return (
    <svg viewBox="0 0 72 68" className="h-[68px] w-[72px]" fill="currentColor" aria-hidden="true">
      <path d="M3.500 31L36 4.500L68.500 31" fill="none" stroke="currentColor" strokeWidth="5" strokeLinecap="round" strokeLinejoin="round" />
      <path d="M54 19V10Q54 8 56 8H60.500Q62.500 8 62.500 10V27Z" />
      <path fillRule="evenodd" d="M36 13L62 34.500V58Q62 64 56 64H16Q10 64 10 58V34.500ZM28 39V57Q28 59 30 59H42Q44 59 44 57V39Q44 37 42 37H30Q28 37 28 39Z" />
    </svg>
  );
}

function SearchIcon() {
  return (
    <svg viewBox="0 0 72 68" className="h-[68px] w-[72px]" fill="none" stroke="currentColor" strokeLinecap="round" aria-hidden="true">
      <circle cx="31" cy="30" r="21" strokeWidth="5" />
      <path d="M46.500 46L61 61" strokeWidth="7" />
    </svg>
  );
}

function WalkIcon() {
  return (
    <svg viewBox="-15 -2 72 68" className="h-[68px] w-[72px]" fill="currentColor" aria-hidden="true">
      <circle cx="20" cy="7" r="6.700" />
      <path d="M16.500 16Q23 16 23.500 22L22 40L27.500 50L32.700 61Q33 65 30 65Q28.500 65 27.500 63L20 49L12.500 41Q10.500 38 11 35V26.500L7.500 29L6.800 37.500Q6 40 3.500 39.700Q1.200 39 1.300 36.500L2.200 27.500Q2.500 25 4.500 23.300L11 18Q13.500 16 16.500 16Z" />
      <path d="M11.200 43.500L16 49.500Q14.500 54 12.500 56L5.500 63.500Q3 65.500 0.800 63.500Q-0.800 61.500 0.800 59.500L8.500 51.500Q9.500 50 11.200 43.500Z" />
      <path d="M26.300 23L30.500 27.500H37.500Q40 27.800 40 30.200Q40 32.700 37.500 33H30Q28.500 33 27.500 32L25.500 29.500Z" />
    </svg>
  );
}

const destinations = ["NG Cafe", "Cookie Wookie", "CodeNinjas", "Korea House"];
const tabs = [
  { label: "Home", Icon: HomeIcon, color: "text-[#767676]" },
  { label: "Search", Icon: SearchIcon, color: "text-[#767676]" },
  { label: "Journey", Icon: WalkIcon, color: "text-[#0784ff]", current: "page" },
];

export default function App() {
  return (
    <div className="min-h-screen bg-white font-['Inter',sans-serif]">
      <div className="mx-auto flex min-h-screen w-[82%] flex-col bg-black text-white">
        <StatusBar />
        <main>
          <h1 className="mt-[59px] text-center text-[61px] leading-[76px] font-bold">Your Journey!</h1>
          <section className="relative mx-[55px] mt-[42px] overflow-hidden rounded-[30px] border-[3px] border-white">
            <MapArt />
            <div className="absolute bottom-4 left-5 flex items-center text-[#e9eef2] [text-shadow:0_0_3px_#000]">
              <FaApple className="size-9" />
              <span className="text-[38px] leading-[48px] font-medium">Maps</span>
            </div>
            <a href="#legal" className="absolute right-9 bottom-5 text-[24px] leading-8 font-medium text-[#a0abbd] underline underline-offset-4">
              Legal
            </a>
          </section>
          <h2 className="mt-[23px] text-center text-[50px] leading-[60px] font-bold">Your Destinations!</h2>
          <ul className="mx-[42px] mt-[127px] overflow-hidden rounded-[26px] bg-[#1c1c1c]">
            {destinations.map((name, i) => (
              <li key={name} className="pl-[62px]">
                <button type="button" className={`flex h-[114px] w-full items-center justify-between pr-[43px] text-left text-[42px] ${i < destinations.length - 1 ? "border-b-2 border-[#2e2e30]" : ""}`}>
                  <span>{name}</span>
                  <svg viewBox="0 0 18 32" className="h-8 w-[18px]" fill="none" stroke="#5b5b5e" strokeWidth="4" strokeLinecap="round" strokeLinejoin="round" aria-hidden="true">
                    <path d="M2 2L15.500 16L2 30" />
                  </svg>
                </button>
              </li>
            ))}
          </ul>
        </main>
        <nav className="mt-auto grid grid-cols-3">
          {tabs.map(({ label, Icon, color, current }) => (
            <button key={label} type="button" aria-current={current} className={`flex flex-col items-center gap-[10px] ${color}`}>
              <Icon />
              <span className="text-[26px] leading-8 font-medium">{label}</span>
            </button>
          ))}
        </nav>
        <div className="mx-auto mt-[58px] mb-[21px] h-[13px] w-[363px] rounded-full bg-white" />
      </div>
    </div>
  );
}
